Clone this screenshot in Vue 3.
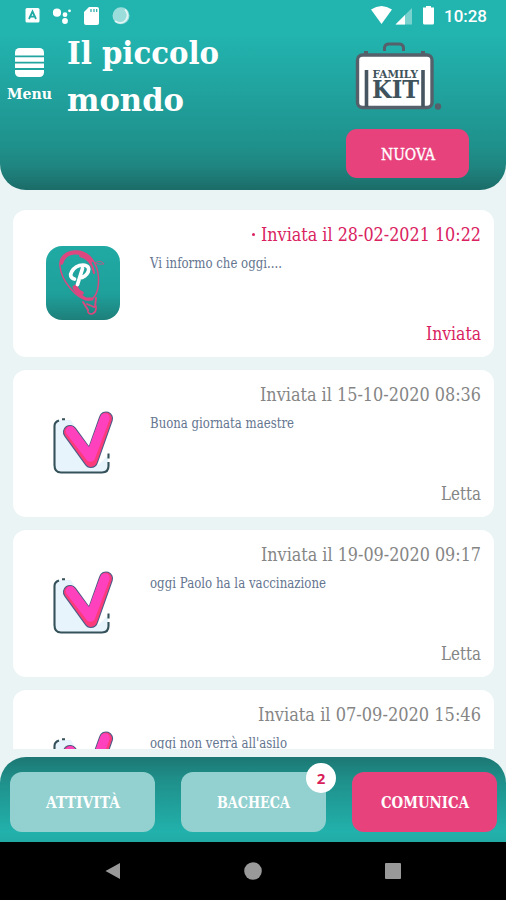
<script setup>
import { h } from 'vue'

// One line of text condensed to a fixed width; the box is as tall as the capitals.
const fit = (vnode) => {
  const el = vnode.el
  el.style.transform = `scaleX(${el.parentElement.offsetWidth / el.getBoundingClientRect().width})`
}
const Line = ({ text, w, size }) => {
  const cap = Math.round(size * 0.73)
  return h('div', { style: { width: w + 'px', height: cap + 'px', lineHeight: cap + 'px', fontSize: size + 'px' } }, [
    h('span', {
      style: { display: 'inline-block', whiteSpace: 'nowrap', verticalAlign: 'top', transformOrigin: '0 50%' },
      onVnodeMounted: fit
    }, text)
  ])
}
Line.props = ['text', 'w', 'size']

const messages = [
  { date: '28-02-2021 10:22', dateW: 220, text: 'Vi informo che oggi....', textW: 132, status: 'Inviata', statusW: 55, fresh: true },
  { date: '15-10-2020 08:36', dateW: 221, text: 'Buona giornata maestre', textW: 144, status: 'Letta', statusW: 40 },
  { date: '19-09-2020 09:17', dateW: 220, text: 'oggi Paolo ha la vaccinazione', textW: 176, status: 'Letta', statusW: 40 },
  { date: '07-09-2020 15:46', dateW: 223, text: "oggi non verrà all'asilo", textW: 137, status: 'Letta', statusW: 40 }
]

const tabs = [
  { label: 'ATTIVITÀ', w: 74 },
  { label: 'BACHECA', w: 73, badge: 2 },
  { label: 'COMUNICA', w: 88, active: true }
]
</script>

<template>
  <div class="screen">
    <header class="header">
      <div class="status">
        <svg width="108" height="20" viewBox="0 0 108 20" fill="#fff">
          <rect x="0.500" y="3" width="14" height="14.500" rx="1.500" />
          <path d="M4 14 7.500 6.500 11 14M5.400 11.600h4.200" fill="none" stroke="#22aaa6" stroke-width="1.800" />
          <circle cx="32" cy="7.700" r="4.100" /><circle cx="40" cy="9.700" r="2.400" />
          <circle cx="44.500" cy="5.800" r="1.400" /><circle cx="40" cy="16" r="2.900" />
          <path d="M64 2h8a2 2 0 0 1 2 2v14a2 2 0 0 1-2 2H61a2 2 0 0 1-2-2V7z" />
          <path d="M66 4v3M69 4v3M71.700 4v3" stroke="#22aaa6" stroke-width="1.200" />
          <circle cx="96" cy="10.700" r="8.500" opacity=".55" />
          <path d="M100 4.500A7.400 7.400 0 0 1 90 16" fill="none" stroke="#fff" stroke-width="1.800" opacity=".7" />
        </svg>
        <div class="status-right">
          <svg width="64" height="20" viewBox="0 0 64 20" fill="#fff">
            <path d="M0 4.500Q10.500-2.500 21 4.500L10.500 19z" />
            <path d="M41 3v16.500H24.500z" opacity=".4" />
            <path d="M34 10v9.500h-9.500z" />
            <path d="M55 1h5v1.500h3V18a1.500 1.500 0 0 1-1.500 1.500h-8A1.500 1.500 0 0 1 52 18V2.500h3z" />
          </svg>
          <Line class="clock" text="10:28" :w="43" :size="17" />
        </div>
      </div>

      <div class="head-row">
        <div class="menu">
          <svg width="29" height="29" viewBox="0 0 29 29">
            <rect width="29" height="29" rx="4.500" fill="#fff" />
            <path d="M0 8.300h29M0 14.600h29M0 21h29" stroke="#22a5a1" stroke-width="1.800" />
          </svg>
          <Line class="bold" text="Menu" :w="45" :size="14.500" />
        </div>
        <div class="title">
          <Line class="bold" text="Il piccolo" :w="152" :size="32" />
          <Line class="bold" text="mondo" :w="117" :size="32" />
        </div>
        <div class="actions">
          <svg class="logo" width="88" height="70" viewBox="0 0 88 70">
            <path d="M29.500 9V5.500Q30 2 34 2h10q4 0 4.500 3.500V9" fill="none" stroke="#55606a" stroke-width="3" />
            <path d="M9 10.500h4M66 10.500h4" stroke="#55606a" stroke-width="3" />
            <rect x="2.500" y="13" width="74.500" height="52.500" rx="5" fill="#fff" stroke="#55606a" stroke-width="3.400" />
            <path d="M11.500 28v37M68 28v37" stroke="#46555f" stroke-width="3.600" />
            <circle cx="83" cy="64.500" r="3.200" fill="#55606a" />
            <text class="logo-text" x="17.500" y="36" font-size="11" textLength="45.500" lengthAdjust="spacingAndGlyphs">FAMILY</text>
            <text class="logo-text" x="17" y="56" font-size="25" textLength="47" lengthAdjust="spacingAndGlyphs">KIT</text>
          </svg>
          <button class="new"><Line text="NUOVA" :w="54" :size="16" /></button>
        </div>
      </div>
    </header>

    <main class="list">
      <article v-for="m in messages" :key="m.date" class="card" :class="{ fresh: m.fresh }">
        <svg v-if="m.fresh" class="pic" width="76" height="76" viewBox="0 0 76 76">
          <defs>
            <linearGradient id="tile" x2="0" y2="1">
              <stop offset="0" stop-color="#20aaa4" /><stop offset=".65" stop-color="#1fa09b" /><stop offset="1" stop-color="#1e7f7a" />
            </linearGradient>
          </defs>
          <rect x="1" y="1" width="74" height="74" rx="16" fill="url(#tile)" />
          <g fill="none" stroke="#dc4780" stroke-linecap="round">
            <path d="M15 21C14 11 22 6 31 6C44 6 53 18 53.500 33C54 46 50 55 43 55C32 54 16 36 15 21" stroke-width="1.500" />
            <path d="M16.500 18C20 5 38 4 46 16" stroke-width="3.600" />
            <path d="M35 11Q47 14 49 28" stroke-width="2" />
            <path d="M29 42Q31 49 41 54H47" stroke-width="3" />
            <path d="M31 41Q32 46 37 48" stroke-width="3.600" />
            <path d="M38 57 43 65M51 53 50 62M42 59l7 3" stroke-width="1.900" />
            <path d="M43 65Q42 69 47 69Q52 67 51 61" stroke-width="1.500" />
            <path d="M50 18Q56 14 59 19Q54 20 50 18" stroke-width="1" opacity=".75" />
          </g>
          <path d="M37.500 23.500 32.500 39.500M29.500 34C21 32 28 20.500 38 20C49 20.500 42 33 34.500 33" fill="none" stroke="#fff" stroke-width="3.700" stroke-linecap="round" />
        </svg>
        <svg v-else class="pic" width="76" height="76" viewBox="0 0 76 76">
          <path d="M9 20Q9 15 14 15H63V62Q63 67 57 67H15Q9 67 9 61z" fill="#e7f4fb" />
          <path d="M21 7h45v41l-13 12z" fill="#fff" />
          <path d="M14 15.500Q9.500 17 9.500 21V60Q9.500 67.500 16 67.500H57Q63.500 67.500 63.500 61V57M17 14.300h3M63.500 53.500V48.500" fill="none" stroke="#35515a" stroke-width="2.100" />
          <path d="M25 27 46 56 61 13.500" fill="none" stroke="#4e5c88" stroke-width="14.200" stroke-linecap="round" stroke-linejoin="round" />
          <path d="M25 27 46 56 61 13.500" fill="none" stroke="#fb3b7a" stroke-width="12" stroke-linecap="round" stroke-linejoin="round" />
          <path d="M25.500 26 45.500 52 60 13" fill="none" stroke="#ff41bd" stroke-width="9.500" stroke-linecap="round" stroke-linejoin="round" />
        </svg>
        <div class="body">
          <div class="date">
            <i v-if="m.fresh" class="dot"></i>
            <Line :text="'Inviata il ' + m.date" :w="m.dateW" :size="19" />
          </div>
          <Line class="text" :text="m.text" :w="m.textW" :size="14" />
          <Line class="state" :text="m.status" :w="m.statusW" :size="19" />
        </div>
      </article>
    </main>

    <nav class="tabs">
      <button v-for="t in tabs" :key="t.label" class="tab" :class="{ active: t.active }">
        <Line class="bold" :text="t.label" :w="t.w" :size="16" />
        <span v-if="t.badge" class="badge">{{ t.badge }}</span>
      </button>
    </nav>

    <footer class="system">
      <svg width="16" height="18" viewBox="0 0 16 18"><path d="M0.500 9 15 1v16z" fill="#999" /></svg>
      <svg width="18" height="18" viewBox="0 0 18 18"><circle cx="9" cy="9" r="8.800" fill="#999" /></svg>
      <svg width="16" height="16" viewBox="0 0 16 16"><rect width="16" height="16" rx="1" fill="#999" /></svg>
    </footer>
  </div>
</template>

<style>
body { background: #ebf4f5; }
</style>

<style scoped>
.screen {
  width: 506px;
  height: 900px;
  display: flex;
  flex-direction: column;
  overflow: hidden;
  background: #ebf4f5;
  font-family: "DejaVu Serif", serif;
}
svg { display: block; flex: none; }
button { border: 0; padding: 0; color: #fff; font-family: inherit; text-align: left; }
.bold { font-weight: 700; }
.header {
  box-sizing: border-box;
  height: 190px;
  flex: none;
  border-radius: 0 0 26px 26px;
  background: linear-gradient(#22b4af 0, #22b4af 35px, #21a6a2 80px, #1f918c 145px, #1f8580 166px, #1b6c68 190px);
  color: #fff;
}
.status {
  height: 32px;
  padding: 0 19px 0 25px;
  display: flex;
  align-items: center;
  justify-content: space-between;
}
.status > svg, .status-right { margin-top: -2px; }
.status-right { display: flex; align-items: center; gap: 9px; }
.clock { font-family: Roboto, sans-serif; font-weight: 500; margin-top: 1px; }
.head-row { display: flex; }
.menu {
  width: 59px;
  padding-top: 15.500px;
  display: flex;
  flex-direction: column;
  align-items: center;
  gap: 11.500px;
}
.title {
  padding: 10px 0 0 8px;
  display: flex;
  flex-direction: column;
  gap: 24px;
}
.actions {
  width: 123px;
  margin: 10px 37px 0 auto;
}
.logo { margin-left: 9px; }
.logo-text { font-weight: 700; fill: #40535c; }
.new {
  box-sizing: border-box;
  margin-top: 17px;
  padding-top: 2px;
  width: 123px;
  height: 49px;
  border-radius: 11px;
  background: #e8427d;
  display: flex;
  align-items: center;
  justify-content: center;
  -webkit-text-stroke: 0.400px #fff;
}
.list {
  height: 539.500px;
  flex: none;
  margin-top: 19.500px;
  padding: 0 12px 0 12.500px;
  overflow: hidden;
}
.card {
  box-sizing: border-box;
  height: 147.500px;
  margin-bottom: 12.500px;
  padding: 17.500px 13px 17px 32.500px;
  display: flex;
  background: #fff;
  border-radius: 13px;
  color: #858585;
}
.fresh { color: #d9225f; }
.pic { margin-top: 18px; }
.body {
  flex: 1;
  margin-left: 29px;
  display: flex;
  flex-direction: column;
}
.date { display: flex; justify-content: flex-end; align-items: center; gap: 6px; }
.dot { width: 3px; height: 3px; border-radius: 50%; background: currentColor; }
.text { margin-top: 17px; color: #64758f; }
.state { margin: auto 0 0 auto; }
.tabs {
  box-sizing: border-box;
  height: 85px;
  flex: none;
  margin-top: 8px;
  padding: 15px 9px 0 10px;
  display: flex;
  justify-content: space-between;
  border-radius: 26px 26px 0 0;
  background: linear-gradient(#1c7773, #1f8e89 25%, #22b1ac 88%, #22aaa5);
}
.tab {
  box-sizing: border-box;
  position: relative;
  padding-top: 2px;
  width: 145px;
  height: 60px;
  border-radius: 12px;
  background: #92d1cf;
  display: flex;
  align-items: center;
  justify-content: center;
}
.active { background: #e8427d; }
.badge {
  position: absolute;
  top: -9px;
  right: -10px;
  width: 30px;
  height: 30px;
  border-radius: 50%;
  background: #fff;
  color: #d81e5b;
  font: 700 15px/30px "Open Sans", sans-serif;
  text-align: center;
}
.system {
  flex: 1;
  padding: 0 105px;
  background: #000;
  display: flex;
  align-items: center;
  justify-content: space-between;
}
</style>
